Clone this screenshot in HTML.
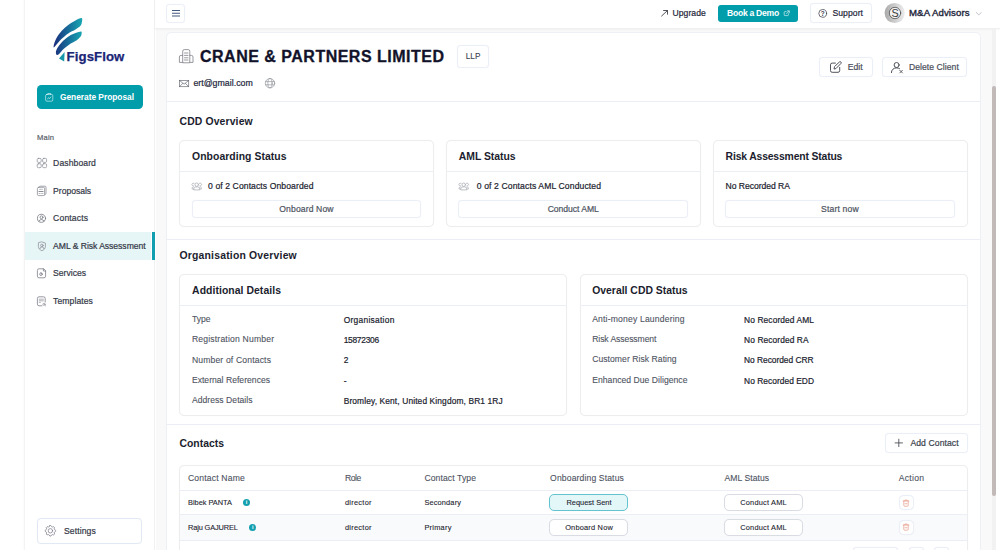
<!DOCTYPE html>
<html lang="en"><head><meta charset="utf-8"><title>FigsFlow - CRANE &amp; PARTNERS LIMITED</title>
<style>
*{box-sizing:border-box;margin:0;padding:0}
html,body{width:1000px;height:550px;overflow:hidden;background:#fff}
body{position:relative;font-family:"Liberation Sans",Arial,sans-serif;color:#1b1d2e}
.b{position:absolute;display:block}
.t{position:absolute;white-space:nowrap;display:block}
.m{-webkit-text-stroke:0.2px currentColor}
.s{-webkit-text-stroke:0.1px currentColor}
.sidebar{background:#fff;border-left:1px solid #f3f3f4;border-right:1px solid #f1f1f3;box-shadow:-1px 0 1.5px rgba(0,0,0,.02)}
.header{background:#fff;border-bottom:1px solid #f0f0f1;box-shadow:0 1px 1.5px rgba(0,0,0,.035)}
.mainbg{background:#f9f9fa}
.card{background:#fff;border:1px solid #edf0f5;border-radius:5px}
.icard{background:#fff;border:1px solid #ededee;border-radius:5px;box-shadow:0 0 1px rgba(0,0,0,.05)}
.hl{background:#ebeff5}
.btn-teal{background:#019dab;border-radius:4.5px}
.btn-out{background:#fff;border:1px solid #eaeef6;border-radius:4px;box-shadow:0 0 1px rgba(120,140,190,.10)}
.info{background:#149fb0;border-radius:50%;color:#fff;font-size:5.5px;line-height:7.4px;text-align:center;font-weight:700}
.info i{font-style:normal;display:block}
svg.ic{position:absolute;overflow:visible}
</style></head>
<body>
<aside>
<nav class="b sidebar" style="left:24px;top:0;width:131px;height:550px"></nav>
<svg class="ic" style="left:48px;top:14px;width:42px;height:52px" viewBox="48 14 42 52" fill="none" stroke-linecap="round" stroke-linejoin="round" ><defs><linearGradient id="lg" x1="53" y1="0" x2="82" y2="0" gradientUnits="userSpaceOnUse"><stop offset="0" stop-color="#1b2a7b"/><stop offset="0.55" stop-color="#176f9b"/><stop offset="1" stop-color="#19a6b2"/></linearGradient></defs><path fill="url(#lg)" d="M81.6,18 C80.5,17.8 77.7,19.2 75.5,20.4 C73.3,21.5 70.5,23.2 68.2,24.9 C65.9,26.6 63.7,28.7 61.8,30.8 C59.9,32.9 58.1,35.4 56.8,37.6 C55.5,39.8 54.6,42.4 54.1,44.0 C53.6,45.6 53.5,47.1 53.7,47.4 C53.9,47.7 54.3,47.1 55.5,45.8 C56.7,44.5 58.8,41.5 60.9,39.5 C63.0,37.5 65.8,35.2 68.2,33.5 C70.6,31.8 73.5,30.8 75.5,29.5 C77.5,28.2 79.4,27.1 80.5,25.8 C81.6,24.5 81.8,22.8 82.0,21.5 C82.2,20.2 82.7,18.2 81.6,18.0 Z"/><path fill="url(#lg)" d="M81.1,31.5 C80.1,31.4 77.7,32.2 75.5,33.1 C73.3,34.0 70.5,35.2 68.2,36.7 C65.9,38.2 63.5,40.4 61.8,42.2 C60.0,44.0 58.7,45.9 57.7,47.6 C56.7,49.3 56.0,51.0 55.9,52.2 C55.8,53.4 56.4,54.7 56.9,55.0 C57.4,55.3 58.0,55.0 59.1,54.0 C60.2,53.0 61.8,50.7 63.6,49.0 C65.4,47.3 67.9,45.4 70.0,44.0 C72.1,42.6 74.7,41.6 76.4,40.4 C78.2,39.2 79.6,37.8 80.5,36.7 C81.4,35.6 81.5,34.7 81.6,33.8 C81.7,32.9 82.1,31.6 81.1,31.5 Z"/><path fill="#1797a8" d="M59,58.5 L64.6,52.1 L64.2,61.4Z"/></svg>
<span class="t" style="left:66.60px;top:48px;font-size:13.2px;line-height:18px;font-weight:700;letter-spacing:0.086px;color:#1a2577;-webkit-text-stroke:0.25px #1a2577;">FigsFlow</span>
<div class="b btn-teal" style="left:36.60px;top:85.00px;width:106.00px;height:24.40px;"></div>
<span class="t" style="left:60.00px;top:91px;font-size:8.4px;line-height:12px;font-weight:700;letter-spacing:-0.031px;color:#fff;">Generate Proposal</span>
<svg class="ic" style="left:43px;top:91px;width:13px;height:13px" viewBox="43 91 13 13" fill="none" stroke-linecap="round" stroke-linejoin="round" ><g stroke="#fff" stroke-opacity="0.8" stroke-width="0.7"><rect x="45.6" y="94.4" width="7.2" height="6.8" rx="1.3"/><path d="M47.8,94.4 v-0.9 h2.8 v0.9"/><path d="M47.6,99 l1,-1.4 l1,1 l1.2,-1.6"/></g></svg>
<span class="t m" style="left:37.00px;top:132px;font-size:7.6px;line-height:11px;letter-spacing:0.175px;color:#5a5f6b;">Main</span>
<div class="b " style="left:25.00px;top:231.80px;width:126.20px;height:28.20px;background:#e6f5f6"></div>
<div class="b " style="left:152.00px;top:232.00px;width:2.60px;height:28.00px;background:#12a0b0"></div>
<span class="t m" style="left:53.10px;top:157px;font-size:8.6px;line-height:12px;letter-spacing:0.091px;color:#343847;">Dashboard</span>
<svg class="ic" style="left:35px;top:156px;width:14px;height:14px" viewBox="35 156 14 14" fill="none" stroke-linecap="round" stroke-linejoin="round" ><g stroke="#8b8e97" stroke-width="0.75"><rect x="37.2" y="158.4" width="4" height="4" rx="1.2"/><rect x="42.6" y="158.4" width="4" height="4" rx="1.2"/><rect x="37.2" y="163.7" width="4" height="4" rx="1.2"/><rect x="42.6" y="163.7" width="4" height="4" rx="1.2"/></g></svg>
<span class="t m" style="left:53.10px;top:185px;font-size:8.6px;line-height:12px;letter-spacing:-0.030px;color:#343847;">Proposals</span>
<svg class="ic" style="left:35px;top:184px;width:14px;height:14px" viewBox="35 184 14 14" fill="none" stroke-linecap="round" stroke-linejoin="round" ><g stroke="#8b8e97" stroke-width="0.8"><rect x="37.4" y="187.3" width="7.2" height="8.3" rx="1.3"/><path d="M38.9,187.2 L40.1,186.2 H45 a1,1 0 0 1 1,1 V193.8 L44.7,194.9"/><path d="M38.9,191.5 h4.2" stroke-width="1.1"/><path d="M39,193.5 h1.2 M41.6,193.5 h1.4" stroke-width="0.6"/><path d="M39.6,189.3 h2.8" stroke-width="0.6"/></g></svg>
<span class="t m" style="left:53.10px;top:212px;font-size:8.6px;line-height:12px;letter-spacing:0.152px;color:#343847;">Contacts</span>
<svg class="ic" style="left:35px;top:212px;width:14px;height:14px" viewBox="35 212 14 14" fill="none" stroke-linecap="round" stroke-linejoin="round" ><g stroke="#6f727c" stroke-width="0.75"><circle cx="41.5" cy="218.3" r="4.05"/><circle cx="41.5" cy="217.3" r="1.45"/><path d="M38.9,221.3 a2.7,2.4 0 0 1 5.2,0"/></g></svg>
<span class="t m" style="left:53.10px;top:240px;font-size:8.6px;line-height:12px;letter-spacing:-0.038px;color:#343847;">AML &amp; Risk Assessment</span>
<svg class="ic" style="left:35px;top:239px;width:14px;height:14px" viewBox="35 239 14 14" fill="none" stroke-linecap="round" stroke-linejoin="round" ><g stroke="#8b8e97" stroke-width="0.75"><path d="M41.9,241.9 L45.4,243.1 V246.4 c0,2.2 -1.6,3.6 -3.5,4.3 c-1.9,-0.7 -3.5,-2.1 -3.5,-4.3 V243.1 Z"/><circle cx="41.9" cy="245.4" r="1.3"/><path d="M39.9,248.8 a2,1.9 0 0 1 4,0"/></g></svg>
<span class="t m" style="left:53.10px;top:267px;font-size:8.6px;line-height:12px;color:#343847;">Services</span>
<svg class="ic" style="left:35px;top:266px;width:14px;height:14px" viewBox="35 266 14 14" fill="none" stroke-linecap="round" stroke-linejoin="round" ><g stroke="#7d808a" stroke-width="0.8"><path d="M43.4,268.8 H39 a1.6,1.6 0 0 0 -1.6,1.6 V276.2 a1.6,1.6 0 0 0 1.6,1.6 H44 a1.6,1.6 0 0 0 1.6,-1.6 V271 Z"/><path d="M43.4,268.8 V271 H45.6"/><circle cx="41" cy="274.2" r="1.3"/><path d="M41,272.9 l0.8,0.5"/></g></svg>
<span class="t m" style="left:53.10px;top:295px;font-size:8.6px;line-height:12px;letter-spacing:0.075px;color:#343847;">Templates</span>
<svg class="ic" style="left:35px;top:294px;width:14px;height:14px" viewBox="35 294 14 14" fill="none" stroke-linecap="round" stroke-linejoin="round" ><g stroke="#7d808a" stroke-width="0.8"><path d="M42,305.8 H39 a1.6,1.6 0 0 1 -1.6,-1.6 V298.4 a1.6,1.6 0 0 1 1.6,-1.6 H43.6 a1.6,1.6 0 0 1 1.6,1.6 V302"/><path d="M39.2,299.2 h4.2 M39.2,300.8 h4.2 M39.2,302.4 h1.2" stroke-width="0.6"/><circle cx="44" cy="304.3" r="1.1" stroke-width="0.6"/><path d="M44.9,305.2 l0.8,0.8" stroke-width="0.6"/></g></svg>
<div class="b btn-out" style="left:37.00px;top:518.20px;width:105.20px;height:25.40px;border-color:#e3e9f4"></div>
<span class="t m" style="left:64.00px;top:525px;font-size:8.6px;line-height:12px;letter-spacing:0.104px;color:#343847;">Settings</span>
<svg class="ic" style="left:44px;top:524px;width:13px;height:14px" viewBox="44 524 13 14" fill="none" stroke-linecap="round" stroke-linejoin="round" ><g stroke="#7d808a" stroke-width="0.75"><path d="M49.88,525.53 L50.92,525.53 L51.65,526.69 L52.43,527.01 L53.76,526.70 L54.50,527.44 L54.19,528.77 L54.51,529.55 L55.67,530.28 L55.67,531.32 L54.51,532.05 L54.19,532.83 L54.50,534.16 L53.76,534.90 L52.43,534.59 L51.65,534.91 L50.92,536.07 L49.88,536.07 L49.15,534.91 L48.37,534.59 L47.04,534.90 L46.30,534.16 L46.61,532.83 L46.29,532.05 L45.13,531.32 L45.13,530.28 L46.29,529.55 L46.61,528.77 L46.30,527.44 L47.04,526.70 L48.37,527.01 L49.15,526.69Z"/><circle cx="50.4" cy="530.8" r="2.2"/></g></svg>
</aside>
<div class="b mainbg" style="left:155.50px;top:29.00px;width:840.50px;height:521.00px;"></div>
<header>
<div class="b header" style="left:155.00px;top:0.00px;width:845.00px;height:29.00px;"></div>
<div class="b btn-out" style="left:166.30px;top:3.60px;width:18.90px;height:19.10px;border-radius:3.5px"></div>
<svg class="ic" style="left:170px;top:8px;width:12px;height:11px" viewBox="170 8 12 11" fill="none" stroke-linecap="round" stroke-linejoin="round" ><path d="M172,10.4 H180 M172,13.2 H180 M172,16 H180" stroke="#44597f" stroke-width="1.05" stroke-linecap="butt"/></svg>
<span class="t m" style="left:672.50px;top:7px;font-size:8.6px;line-height:12px;letter-spacing:0.052px;color:#23263a;">Upgrade</span>
<svg class="ic" style="left:659px;top:8px;width:11px;height:11px" viewBox="659 8 11 11" fill="none" stroke-linecap="round" stroke-linejoin="round" ><path d="M661.6,16 L667.4,10.6 M663.6,10.5 H667.5 V14.2" stroke="#33363f" stroke-width="0.85"/></svg>
<div class="b btn-teal" style="left:718.40px;top:4.50px;width:79.20px;height:17.50px;border-radius:3px"></div>
<span class="t" style="left:727.00px;top:7px;font-size:8.6px;line-height:12px;font-weight:700;letter-spacing:-0.276px;color:#fff;">Book a Demo</span>
<svg class="ic" style="left:782px;top:9px;width:10px;height:9px" viewBox="782 9 10 9" fill="none" stroke-linecap="round" stroke-linejoin="round" ><g stroke="#fff" stroke-opacity="0.85" stroke-width="0.7"><path d="M786.2,11.6 H785 a0.8,0.8 0 0 0 -0.8,0.8 V14.8 a0.8,0.8 0 0 0 0.8,0.8 H787.6 a0.8,0.8 0 0 0 0.8,-0.8 V13.8"/><path d="M787.4,10.9 H789.3 V12.8 M789.2,11 L786.6,13.6"/></g></svg>
<div class="b btn-out" style="left:810.40px;top:3.40px;width:61.20px;height:19.60px;border-radius:3.5px"></div>
<span class="t m" style="left:832.40px;top:7px;font-size:8.6px;line-height:12px;letter-spacing:0.080px;color:#23263a;">Support</span>
<svg class="ic" style="left:817px;top:8px;width:12px;height:11px" viewBox="817 8 12 11" fill="none" stroke-linecap="round" stroke-linejoin="round" ><circle cx="822.7" cy="13.4" r="3.9" stroke="#3d4049" stroke-width="0.75"/><text x="822.7" y="15.7" font-family="Liberation Sans, sans-serif" font-size="6.4" font-weight="700" fill="#3d4049" text-anchor="middle" stroke="none">?</text></svg>
<svg class="ic" style="left:884px;top:2px;width:22px;height:22px" viewBox="884 2 22 22" fill="none" stroke-linecap="round" stroke-linejoin="round" ><defs><linearGradient id="ag" x1="884" y1="0" x2="905" y2="0" gradientUnits="userSpaceOnUse"><stop offset="0" stop-color="#a6a6a6"/><stop offset="0.5" stop-color="#cdcdcd"/><stop offset="1" stop-color="#ededed"/></linearGradient></defs><circle cx="894.7" cy="13" r="10.1" fill="url(#ag)"/><circle cx="895" cy="13" r="5.7" fill="#f3f3f3" stroke="#3a3a3a" stroke-width="0.7"/><text x="895" y="16.9" font-family="Liberation Sans, sans-serif" font-size="10.8" fill="#3a3a3a" text-anchor="middle" stroke="none">S</text></svg>
<span class="t" style="left:909.00px;top:6px;font-size:9.6px;line-height:13px;letter-spacing:0.125px;color:#23263a;-webkit-text-stroke:0.38px #23263a;">M&amp;A Advisors</span>
<svg class="ic" style="left:974px;top:10px;width:10px;height:7px" viewBox="974 10 10 7" fill="none" stroke-linecap="round" stroke-linejoin="round" ><path d="M976.3,12.5 L978.8,14.9 L981.3,12.5" stroke="#b3b6be" stroke-width="0.85"/></svg>
</header>
<main>
<div class="b " style="left:992.00px;top:29.00px;width:4.00px;height:521.00px;background:#f2f2f3"></div>
<div class="b " style="left:992.00px;top:86.00px;width:4.00px;height:409.60px;background:#c2b9b9;border-radius:2px"></div>
<div class="b card" style="left:166.00px;top:32.00px;width:814.50px;height:528.00px;border-radius:5px"></div>
<svg class="ic" style="left:177px;top:47px;width:18px;height:18px" viewBox="177 47 18 18" fill="none" stroke-linecap="round" stroke-linejoin="round" ><g stroke="#85878f" stroke-width="0.85"><path d="M182.7,62.4 V51.2 a1.6,1.6 0 0 1 1.6,-1.6 H188.2 a1.6,1.6 0 0 1 1.6,1.6 V62.4 Z"/><path d="M182.7,55.4 H181 a1.6,1.6 0 0 0 -1.6,1.6 V62.4 H182.7"/><path d="M189.8,55.4 H191.4 a1.6,1.6 0 0 1 1.6,1.6 V62.4 H189.8"/><path d="M184.5,53 H188 M184.5,55.4 H188 M184.5,57.8 H188 M184.5,60 H188"/></g></svg>
<span class="t" style="left:200.00px;top:46px;font-size:16px;line-height:22px;font-weight:700;letter-spacing:0.496px;color:#12132a;-webkit-text-stroke:0.3px #12132a;">CRANE &amp; PARTNERS LIMITED</span>
<div class="b btn-out" style="left:457.00px;top:44.80px;width:31.70px;height:22.80px;border-radius:3.5px"></div>
<span class="t s" style="left:465.70px;top:51px;font-size:8.2px;line-height:11px;letter-spacing:0.105px;color:#3a3f4d;">LLP</span>
<svg class="ic" style="left:178px;top:78px;width:13px;height:11px" viewBox="178 78 13 11" fill="none" stroke-linecap="round" stroke-linejoin="round" ><g stroke="#6c6f79" stroke-width="0.7" stroke-linejoin="miter"><rect x="179.5" y="80.4" width="9.2" height="6.3"/><path d="M179.5,80.4 L184.1,84.2 L188.7,80.4 M179.5,86.7 L182.9,83.2 M188.7,86.7 L185.3,83.2"/></g></svg>
<span class="t m" style="left:193.40px;top:77px;font-size:8.8px;line-height:12px;letter-spacing:0.008px;color:#23263a;">ert@gmail.com</span>
<svg class="ic" style="left:264px;top:77px;width:12px;height:13px" viewBox="264 77 12 13" fill="none" stroke-linecap="round" stroke-linejoin="round" ><g stroke="#85888f" stroke-width="0.6"><circle cx="270" cy="83.2" r="4.7"/><ellipse cx="270" cy="83.2" rx="2.1" ry="4.7"/><path d="M265.7,81.6 H274.3 M265.7,84.8 H274.3"/></g></svg>
<div class="b btn-out" style="left:818.50px;top:57.40px;width:54.70px;height:19.20px;border-radius:3.5px"></div>
<span class="t m" style="left:847.70px;top:61px;font-size:8.6px;line-height:12px;letter-spacing:0.060px;color:#4a4e5a;">Edit</span>
<svg class="ic" style="left:828px;top:59px;width:16px;height:16px" viewBox="828 59 16 16" fill="none" stroke-linecap="round" stroke-linejoin="round" ><g stroke="#3c3f48" stroke-width="0.9"><path d="M835.4,63.1 H832.2 a1.7,1.7 0 0 0 -1.7,1.7 V70.6 a1.7,1.7 0 0 0 1.7,1.7 H838 a1.7,1.7 0 0 0 1.7,-1.7 V67.4"/><path d="M834.1,68.7 L834.5,66.6 L839.4,62 a1.05,1.05 0 0 1 1.5,1.5 L836.2,68.3 Z"/></g></svg>
<div class="b btn-out" style="left:882.30px;top:57.40px;width:85.00px;height:19.20px;border-radius:3.5px"></div>
<span class="t m" style="left:909.00px;top:61px;font-size:8.6px;line-height:12px;letter-spacing:0.047px;color:#4a4e5a;">Delete Client</span>
<svg class="ic" style="left:889px;top:60px;width:16px;height:16px" viewBox="889 60 16 16" fill="none" stroke-linecap="round" stroke-linejoin="round" ><g stroke="#3c3f48" stroke-width="0.9"><circle cx="896.6" cy="65" r="2.5"/><path d="M891.4,72.6 c0,-3 2.3,-4.7 5.2,-4.7 c1.2,0 2.2,0.3 3,0.8"/><path d="M899.8,70.3 l2.6,2.6 M902.4,70.3 l-2.6,2.6" stroke-width="0.8"/></g></svg>
<div class="b hl" style="left:167.00px;top:101.00px;width:812.50px;height:1.00px;"></div>
<section>
<span class="t" style="left:179.50px;top:114px;font-size:10.4px;line-height:15px;font-weight:700;letter-spacing:0.139px;">CDD Overview</span>
<div class="b icard" style="left:179.00px;top:140.30px;width:254.60px;height:86.90px;"></div>
<div class="b hl" style="left:179.00px;top:170.80px;width:254.60px;height:1.00px;"></div>
<span class="t" style="left:192.10px;top:149px;font-size:10.4px;line-height:15px;font-weight:700;letter-spacing:0.050px;">Onboarding Status</span>
<svg class="ic" style="left:191px;top:181px;width:12px;height:10px" viewBox="191 181 12 10" fill="none" stroke-linecap="round" stroke-linejoin="round" ><g stroke="#a8abb3" stroke-width="0.75"><circle cx="196.75" cy="184.7" r="1.75"/><path d="M193.75,189.5 v-0.6 a2,2 0 0 1 2,-2 h2 a2,2 0 0 1 2,2 v0.6 Z"/><path d="M194.15,183.4 a1.4,1.4 0 1 0 -0.6,2.5"/><path d="M199.35,183.4 a1.4,1.4 0 1 1 0.6,2.5"/><path d="M193.35,186.9 h-0.2 a1.5,1.5 0 0 0 -1.1,1.5 v0.6 h1.6"/><path d="M200.15,186.9 h0.2 a1.5,1.5 0 0 1 1.1,1.5 v0.6 h-1.6"/></g></svg>
<span class="t m" style="left:208.10px;top:180px;font-size:8.6px;line-height:12px;letter-spacing:0.089px;">0 of 2 Contacts Onboarded</span>
<div class="b btn-out" style="left:191.60px;top:200.30px;width:229.70px;height:17.50px;border-radius:3.5px"></div>
<span class="t m" style="left:279.30px;top:203px;font-size:8.6px;line-height:12px;letter-spacing:0.124px;color:#4d5361;">Onboard Now</span>
<div class="b icard" style="left:446.20px;top:140.30px;width:254.60px;height:86.90px;"></div>
<div class="b hl" style="left:446.20px;top:170.80px;width:254.60px;height:1.00px;"></div>
<span class="t" style="left:458.80px;top:149px;font-size:10.4px;line-height:15px;font-weight:700;letter-spacing:-0.024px;">AML Status</span>
<svg class="ic" style="left:458px;top:181px;width:12px;height:10px" viewBox="458 181 12 10" fill="none" stroke-linecap="round" stroke-linejoin="round" ><g stroke="#a8abb3" stroke-width="0.75"><circle cx="463.75" cy="184.7" r="1.75"/><path d="M460.75,189.5 v-0.6 a2,2 0 0 1 2,-2 h2 a2,2 0 0 1 2,2 v0.6 Z"/><path d="M461.15,183.4 a1.4,1.4 0 1 0 -0.6,2.5"/><path d="M466.35,183.4 a1.4,1.4 0 1 1 0.6,2.5"/><path d="M460.35,186.9 h-0.2 a1.5,1.5 0 0 0 -1.1,1.5 v0.6 h1.6"/><path d="M467.15,186.9 h0.2 a1.5,1.5 0 0 1 1.1,1.5 v0.6 h-1.6"/></g></svg>
<span class="t m" style="left:476.80px;top:180px;font-size:8.6px;line-height:12px;letter-spacing:0.114px;">0 of 2 Contacts AML Conducted</span>
<div class="b btn-out" style="left:458.40px;top:200.30px;width:229.80px;height:17.50px;border-radius:3.5px"></div>
<span class="t m" style="left:547.65px;top:203px;font-size:8.6px;line-height:12px;letter-spacing:-0.033px;color:#4d5361;">Conduct AML</span>
<div class="b icard" style="left:713.40px;top:140.30px;width:254.20px;height:86.90px;"></div>
<div class="b hl" style="left:713.40px;top:170.80px;width:254.20px;height:1.00px;"></div>
<span class="t" style="left:725.60px;top:149px;font-size:10.4px;line-height:15px;font-weight:700;letter-spacing:-0.168px;">Risk Assessment Status</span>
<span class="t m" style="left:725.60px;top:180px;font-size:8.6px;line-height:12px;letter-spacing:-0.047px;">No Recorded RA</span>
<div class="b btn-out" style="left:725.00px;top:200.30px;width:229.80px;height:17.50px;border-radius:3.5px"></div>
<span class="t m" style="left:821.05px;top:203px;font-size:8.6px;line-height:12px;letter-spacing:0.171px;color:#4d5361;">Start now</span>
<div class="b hl" style="left:167.00px;top:239.00px;width:812.50px;height:1.00px;"></div>
</section><section>
<span class="t" style="left:179.50px;top:248px;font-size:10.4px;line-height:15px;font-weight:700;letter-spacing:0.201px;">Organisation Overview</span>
<div class="b icard" style="left:179.00px;top:274.00px;width:387.50px;height:142.00px;"></div>
<div class="b hl" style="left:179.00px;top:305.00px;width:387.50px;height:1.00px;"></div>
<span class="t" style="left:192.10px;top:283px;font-size:10.4px;line-height:15px;font-weight:700;letter-spacing:0.063px;">Additional Details</span>
<span class="t s" style="left:191.90px;top:313px;font-size:8.6px;line-height:12px;letter-spacing:-0.015px;color:#4d5361;">Type</span>
<span class="t m" style="left:343.70px;top:314px;font-size:8.4px;line-height:12px;letter-spacing:0.288px;">Organisation</span>
<span class="t s" style="left:191.90px;top:333px;font-size:8.6px;line-height:12px;letter-spacing:0.185px;color:#4d5361;">Registration Number</span>
<span class="t m" style="left:343.70px;top:334px;font-size:8.4px;line-height:12px;letter-spacing:-0.268px;">15872306</span>
<span class="t s" style="left:191.90px;top:354px;font-size:8.6px;line-height:12px;letter-spacing:0.154px;color:#4d5361;">Number of Contacts</span>
<span class="t m" style="left:343.70px;top:354px;font-size:8.4px;line-height:12px;">2</span>
<span class="t s" style="left:191.90px;top:374px;font-size:8.6px;line-height:12px;letter-spacing:0.016px;color:#4d5361;">External References</span>
<span class="t m" style="left:343.70px;top:375px;font-size:8.4px;line-height:12px;">-</span>
<span class="t s" style="left:191.90px;top:394px;font-size:8.6px;line-height:12px;letter-spacing:0.034px;color:#4d5361;">Address Details</span>
<span class="t m" style="left:343.70px;top:395px;font-size:8.4px;line-height:12px;letter-spacing:0.126px;">Bromley, Kent, United Kingdom, BR1 1RJ</span>
<div class="b icard" style="left:579.80px;top:274.00px;width:387.80px;height:142.00px;"></div>
<div class="b hl" style="left:579.80px;top:305.00px;width:387.80px;height:1.00px;"></div>
<span class="t" style="left:592.20px;top:283px;font-size:10.4px;line-height:15px;font-weight:700;letter-spacing:0.008px;">Overall CDD Status</span>
<span class="t s" style="left:592.20px;top:313px;font-size:8.6px;line-height:12px;letter-spacing:0.174px;color:#4d5361;">Anti-money Laundering</span>
<span class="t m" style="left:744.10px;top:314px;font-size:8.4px;line-height:12px;letter-spacing:0.104px;">No Recorded AML</span>
<span class="t s" style="left:592.20px;top:333px;font-size:8.6px;line-height:12px;letter-spacing:-0.084px;color:#4d5361;">Risk Assessment</span>
<span class="t m" style="left:744.10px;top:334px;font-size:8.4px;line-height:12px;letter-spacing:0.085px;">No Recorded RA</span>
<span class="t s" style="left:592.20px;top:353px;font-size:8.6px;line-height:12px;letter-spacing:0.045px;color:#4d5361;">Customer Risk Rating</span>
<span class="t m" style="left:744.10px;top:354px;font-size:8.4px;line-height:12px;letter-spacing:-0.031px;">No Recorded CRR</span>
<span class="t s" style="left:592.20px;top:374px;font-size:8.6px;line-height:12px;letter-spacing:0.030px;color:#4d5361;">Enhanced Due Diligence</span>
<span class="t m" style="left:744.10px;top:375px;font-size:8.4px;line-height:12px;letter-spacing:0.038px;">No Recorded EDD</span>
<div class="b hl" style="left:167.00px;top:424.00px;width:812.50px;height:1.00px;"></div>
</section><section>
<span class="t" style="left:179.50px;top:436px;font-size:10.4px;line-height:15px;font-weight:700;">Contacts</span>
<div class="b btn-out" style="left:884.90px;top:432.90px;width:82.70px;height:19.90px;border-radius:3.5px"></div>
<svg class="ic" style="left:893px;top:437px;width:12px;height:12px" viewBox="893 437 12 12" fill="none" stroke-linecap="round" stroke-linejoin="round" ><path d="M895.1,442.9 H902.5 M898.8,439.2 V446.6" stroke="#44474f" stroke-width="0.85"/></svg>
<span class="t m" style="left:910.40px;top:437px;font-size:8.6px;line-height:12px;letter-spacing:0.097px;color:#3a3f4d;">Add Contact</span>
<div class="b icard" style="left:179.00px;top:465.20px;width:788.60px;height:94.80px;"></div>
<div class="b " style="left:179.50px;top:515.00px;width:787.60px;height:25.00px;background:#f9fafb"></div>
<div class="b hl" style="left:179.00px;top:489.80px;width:788.60px;height:1.00px;"></div>
<div class="b hl" style="left:179.00px;top:513.90px;width:788.60px;height:1.00px;"></div>
<div class="b hl" style="left:179.00px;top:539.50px;width:788.60px;height:1.00px;"></div>
<span class="t s" style="left:188.00px;top:472px;font-size:8.6px;line-height:12px;letter-spacing:0.166px;color:#4d5361;">Contact Name</span>
<span class="t s" style="left:344.90px;top:472px;font-size:8.6px;line-height:12px;letter-spacing:-0.396px;color:#4d5361;">Role</span>
<span class="t s" style="left:424.40px;top:472px;font-size:8.6px;line-height:12px;letter-spacing:0.098px;color:#4d5361;">Contact Type</span>
<span class="t s" style="left:550.10px;top:472px;font-size:8.6px;line-height:12px;letter-spacing:0.130px;color:#4d5361;">Onboarding Status</span>
<span class="t s" style="left:724.60px;top:472px;font-size:8.6px;line-height:12px;letter-spacing:0.041px;color:#4d5361;">AML Status</span>
<span class="t s" style="left:898.80px;top:472px;font-size:8.6px;line-height:12px;letter-spacing:0.259px;color:#4d5361;">Action</span>
<span class="t s" style="left:188.00px;top:498px;font-size:7.4px;line-height:10px;letter-spacing:-0.014px;">Bibek PANTA</span>
<span class="b info" style="left:242.8px;top:498.8px;width:7.4px;height:7.4px"><i>i</i></span>
<span class="t s" style="left:344.90px;top:498px;font-size:7.4px;line-height:10px;letter-spacing:0.289px;">director</span>
<span class="t s" style="left:424.40px;top:498px;font-size:7.4px;line-height:10px;letter-spacing:0.153px;">Secondary</span>
<div class="b btn-out" style="left:549.30px;top:494.40px;width:78.40px;height:16.30px;border-radius:5px;background:#e3f6f8;border-color:#63c4cf;"></div>
<span class="t s" style="left:566.50px;top:498px;font-size:7.4px;line-height:10px;letter-spacing:0.014px;">Request Sent</span>
<div class="b btn-out" style="left:724.00px;top:494.40px;width:79.00px;height:16.30px;border-radius:5px;border-color:#d9dce3;"></div>
<span class="t s" style="left:740.25px;top:498px;font-size:7.4px;line-height:10px;letter-spacing:0.207px;">Conduct AML</span>
<div class="b btn-out" style="left:898.60px;top:495.00px;width:15.20px;height:14.80px;border-radius:4.5px;"></div>
<svg class="ic" style="left:901.1px;top:497.7px;width:10.0px;height:10.0px" viewBox="901.1 497.7 10.0 10.0" fill="none" stroke-linecap="round" stroke-linejoin="round" ><g stroke="#e59a85" stroke-width="0.7"><path d="M903.2,500.7 H909.0"/><path d="M905.0,500.59999999999997 v-0.9 h2.2 v0.9"/><path d="M903.9,500.7 v4.3 a0.9,0.9 0 0 0 0.9,0.9 h2.6 a0.9,0.9 0 0 0 0.9,-0.9 v-4.3"/><path d="M905.2,503.4 h1.8"/></g></svg>
<span class="t s" style="left:188.00px;top:523px;font-size:7.4px;line-height:10px;letter-spacing:-0.128px;">Raju GAJUREL</span>
<span class="b info" style="left:249.1px;top:523.8px;width:7.4px;height:7.4px"><i>i</i></span>
<span class="t s" style="left:344.90px;top:523px;font-size:7.4px;line-height:10px;letter-spacing:0.289px;">director</span>
<span class="t s" style="left:424.40px;top:523px;font-size:7.4px;line-height:10px;letter-spacing:0.252px;">Primary</span>
<div class="b btn-out" style="left:549.30px;top:519.30px;width:78.40px;height:16.30px;border-radius:5px;border-color:#d9dce3;"></div>
<span class="t s" style="left:565.15px;top:523px;font-size:7.4px;line-height:10px;letter-spacing:0.204px;">Onboard Now</span>
<div class="b btn-out" style="left:724.00px;top:519.30px;width:79.00px;height:16.30px;border-radius:5px;border-color:#d9dce3;"></div>
<span class="t s" style="left:740.25px;top:523px;font-size:7.4px;line-height:10px;letter-spacing:0.207px;">Conduct AML</span>
<div class="b btn-out" style="left:898.60px;top:520.00px;width:15.20px;height:14.80px;border-radius:4.5px;"></div>
<svg class="ic" style="left:901.1px;top:522.1px;width:10.0px;height:10.0px" viewBox="901.1 522.1 10.0 10.0" fill="none" stroke-linecap="round" stroke-linejoin="round" ><g stroke="#e59a85" stroke-width="0.7"><path d="M903.2,525.1 H909.0"/><path d="M905.0,525.0 v-0.9 h2.2 v0.9"/><path d="M903.9,525.1 v4.3 a0.9,0.9 0 0 0 0.9,0.9 h2.6 a0.9,0.9 0 0 0 0.9,-0.9 v-4.3"/><path d="M905.2,527.8000000000001 h1.8"/></g></svg>
<div class="b btn-out" style="left:852.80px;top:547.40px;width:45.20px;height:12.60px;border-radius:3px"></div>
<div class="b btn-out" style="left:908.60px;top:547.40px;width:15.40px;height:12.60px;border-radius:3px"></div>
<div class="b btn-out" style="left:934.30px;top:547.40px;width:14.90px;height:12.60px;border-radius:3px"></div>
</section></main>
</body></html>
